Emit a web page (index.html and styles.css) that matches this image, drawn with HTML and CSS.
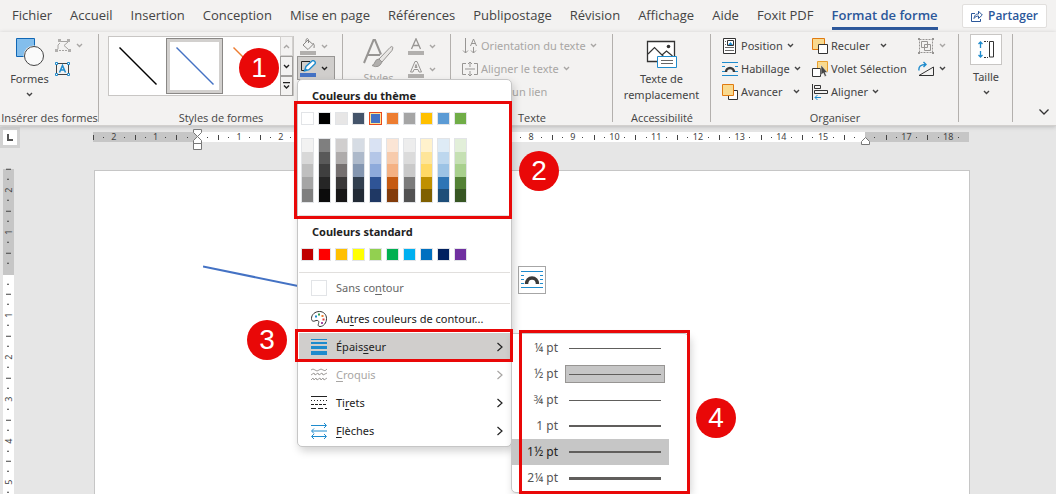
FILE: index.html
```html
<!DOCTYPE html>
<html lang="fr">
<head>
<meta charset="utf-8">
<title>Format de forme</title>
<link rel="stylesheet" href="styles.css">
</head>
<body>
<svg class="defs" aria-hidden="true">
  <symbol id="chev" viewBox="0 0 7 5"><path d="M1 1l2.500 2.500L6 1" fill="none" stroke="currentColor" stroke-width="1.400"/></symbol>
  <symbol id="arrow" viewBox="0 0 8 10"><path d="M1.500 1L6 5L1.500 9" fill="none" stroke="currentColor" stroke-width="1.200"/></symbol>
  <symbol id="wrap" viewBox="0 0 16 14"><path d="M0 .5h16M0 13.500h16M0 4.500h3M0 9.500h3M13 4.500h3M13 9.500h3" stroke="#1e8bcd"/><path d="M4 10a4 4 0 0 1 8 0" fill="none" stroke="#3b3a39" stroke-width="2.400"/></symbol>
</svg>
<div class="app">
  <nav class="tabs">
    <a href="#">Fichier</a><a href="#">Accueil</a><a href="#">Insertion</a><a href="#">Conception</a><a href="#">Mise en page</a><a href="#">Références</a><a href="#">Publipostage</a><a href="#">Révision</a><a href="#">Affichage</a><a href="#">Aide</a><a href="#">Foxit PDF</a><a href="#" class="active">Format de forme</a>
    <button class="share"><svg width="12" height="12" viewBox="0 0 12 12" fill="none" stroke="#2b579a"><path d="M4 3.500H.5v8h9V9"/><path d="M3 8.500C3.500 5 5 4 7.500 4V1.200L11.300 5 7.500 8.500V6C5.500 6 4 6.800 3 8.500z"/></svg>Partager</button>
  </nav>

  <div class="ribbon">
    <section class="group g-insert">
      <div class="body">
        <button class="big"><svg width="30" height="30" viewBox="0 0 30 30"><path d="M1.500 1.500h18v18h-18z" fill="#83beec" stroke="#1067b5"/><circle cx="19" cy="19" r="10.500" fill="#f3f2f1"/><circle cx="19" cy="19" r="9.500" fill="#fafafa" stroke="#444"/></svg><span>Formes</span><svg class="chev"><use href="#chev"/></svg></button>
        <div class="stack">
          <button class="tool dim" aria-label="Modifier la forme"><svg width="16" height="14" viewBox="0 0 16 14"><path d="M5 2.500h8M3 10Q2 5 5 4M13 3L9 6.500l4 3.500" fill="none" stroke="#a6a4a2"/><path d="M3 0h3v3H3zM12 0h3v3h-3zM0 10h3v3H0zM13 10h3v3h-3z" fill="#b1afad"/><path d="M4 11.500h8" stroke="#a6a4a2" stroke-dasharray="2 1"/></svg><svg class="chev"><use href="#chev"/></svg></button>
          <button class="tool" aria-label="Zone de texte"><svg width="16" height="14" viewBox="0 0 16 14"><path d="M1.500 1.500h12v11h-12z" fill="none" stroke="#444"/><path d="M4.500 10.500L7.500 3.500l3 7M5.500 8h4" fill="none" stroke="#1e8bcd" stroke-width="1.500"/><path d="M.5.5h2v2h-2zM12.500.5h2v2h-2zM.5 11.500h2v2h-2zM12.500 11.500h2v2h-2z" fill="#fff" stroke="#1e8bcd"/></svg></button>
        </div>
      </div>
      <h2>Insérer des formes</h2>
    </section>

    <section class="group g-styles">
      <div class="body">
        <div class="gallery">
          <button class="thumb" aria-label="Trait noir"><svg width="40" height="40"><path d="M1.500 1.500l37 37" stroke="#000" stroke-width="1.400"/></svg></button>
          <button class="thumb selected" aria-label="Trait bleu"><svg width="40" height="40"><path d="M1.500 1.500l37 37" stroke="#4472c4" stroke-width="1.400"/></svg></button>
          <button class="thumb" aria-label="Trait orange"><svg width="40" height="40"><path d="M1.500 1.500l37 37" stroke="#ed7d31" stroke-width="1.400"/></svg></button>
          <div class="scroller">
            <button class="dim" aria-label="Haut"><svg class="chev flip"><use href="#chev"/></svg></button>
            <button aria-label="Bas"><svg class="chev"><use href="#chev"/></svg></button>
            <button aria-label="Autres"><svg width="7" height="8" viewBox="0 0 7 8"><path d="M0 .5h7M1 3.500l2.500 2.500L6 3.500" fill="none" stroke="#222" stroke-width="1.400"/></svg></button>
          </div>
        </div>
        <div class="paint">
          <button class="tool dim" aria-label="Remplissage"><svg width="16" height="17" viewBox="0 0 16 17"><path d="M3 7L8 2l5 4.500-5 5zM6 4V1.500Q7.500-.5 8.500 1.500V5M13 5q2 2 1 5" fill="none" stroke="#8a8886"/><path d="M0 13h16v4H0z" fill="#b1afad"/></svg><svg class="chev"><use href="#chev"/></svg></button>
          <div class="dropdown">
            <button class="tool pressed" aria-label="Contour"><svg width="16" height="17" viewBox="0 0 16 17"><path d="M10 1.500H1.500v9H5" fill="none" stroke="#222"/><path d="M4.500 11l1.500-4.500L12 1q1-1 2.500.300T14.800 4L9 9.700z" fill="#fff" stroke="#1e8bcd" stroke-width="1.400"/><path d="M4.500 11l1-3 2 2z" fill="#1e8bcd"/><path d="M0 13h16v4H0z" fill="#4472c4"/></svg><svg class="chev"><use href="#chev"/></svg></button>

            <div class="menu" role="menu">
              <h3>Couleurs du thème</h3>
              <div class="swatches">
                <button class="c-fff" aria-label="Blanc"></button><button class="c-000" aria-label="Noir"></button><button class="c-gray" aria-label="Gris clair"></button><button class="c-slate" aria-label="Bleu-gris"></button><button class="c-blue chosen" aria-label="Bleu"></button><button class="c-orange" aria-label="Orange"></button><button class="c-mid" aria-label="Gris"></button><button class="c-gold" aria-label="Or"></button><button class="c-sky" aria-label="Bleu ciel"></button><button class="c-green" aria-label="Vert"></button>
              </div>
              <div class="swatches tints">
                <button class="t1" aria-label="Nuances de blanc"></button><button class="t2" aria-label="Nuances de noir"></button><button class="t3" aria-label="Nuances de gris clair"></button><button class="t4" aria-label="Nuances de bleu-gris"></button><button class="t5" aria-label="Nuances de bleu"></button><button class="t6" aria-label="Nuances d'orange"></button><button class="t7" aria-label="Nuances de gris"></button><button class="t8" aria-label="Nuances d'or"></button><button class="t9" aria-label="Nuances de bleu ciel"></button><button class="t10" aria-label="Nuances de vert"></button>
              </div>
              <hr>
              <h3>Couleurs standard</h3>
              <div class="swatches standard">
                <button class="s1" aria-label="Rouge foncé"></button><button class="s2" aria-label="Rouge"></button><button class="s3" aria-label="Orange standard"></button><button class="s4" aria-label="Jaune"></button><button class="s5" aria-label="Vert clair"></button><button class="s6" aria-label="Vert standard"></button><button class="s7" aria-label="Bleu clair"></button><button class="s8" aria-label="Bleu standard"></button><button class="s9" aria-label="Bleu foncé"></button><button class="s10" aria-label="Violet"></button>
              </div>
              <hr>
              <button class="item none"><span class="empty"></span><span>Sans co<u>n</u>tour</span></button>
              <hr>
              <div class="items">
                <button class="item"><svg width="16" height="16" viewBox="0 0 16 16"><path d="M5 9.500C2 11 .5 10 .5 7.500.5 3.500 4 .5 8.500.5c4 0 7 3 7 7 0 4.500-3 8-6.500 8-2 0-2-1.500-1.500-3S8 9 5 9.500z" fill="#fff" stroke="#333"/><path d="M4 4.500h2v2H4z" fill="#1e8bcd"/><path d="M7 2.500h2v2H7z" fill="#2e9e4f"/><path d="M10.500 4h2v2h-2z" fill="#ed7d31"/><path d="M11.500 7.500h2v2h-2z" fill="#e03b3b"/><path d="M10 11h2v2h-2z" fill="#a349a4"/></svg><span>Au<u>t</u>res couleurs de contour...</span></button>
                <div class="sub">
                  <button class="item open"><svg width="16" height="16"><path d="M0 .5h16" stroke="#1e8bcd"/><path d="M0 3h16v2H0zM0 7h16v3H0zM0 12h16v4H0z" fill="#1e8bcd"/></svg><span>Épais<u>s</u>eur</span><svg class="arrow"><use href="#arrow"/></svg></button>
                  <div class="weights" role="menu">
                    <button><span>¼ pt</span><i class="w1"></i></button>
                    <button><span>½ pt</span><i class="w1 current"></i></button>
                    <button><span>¾ pt</span><i class="w1"></i></button>
                    <button><span>1 pt</span><i class="w2"></i></button>
                    <button class="hover"><span>1½ pt</span><i class="w2"></i></button>
                    <button><span>2¼ pt</span><i class="w3"></i></button>
                  </div>
                </div>
                <button class="item off" disabled><svg width="16" height="14" viewBox="0 0 16 14" fill="none" stroke="#a19f9d"><path d="M0 2q2-2 4 0t4 0 4 0 4-1M0 7l3-2 1 2 3-2 1 2 3-2 1 2 4-2M0 12l2-2 1 2 2-2 1 2 3-2 1 2 2-2 1 2 3-2"/></svg><span><u>C</u>roquis</span><svg class="arrow"><use href="#arrow"/></svg></button>
                <button class="item"><svg width="16" height="14" stroke="#222"><path d="M0 .5h16"/><path d="M0 4.500h16" stroke-dasharray="1 2"/><path d="M0 8.500h16" stroke-dasharray="3 1"/><path d="M0 12.500h16" stroke-dasharray="5 2"/></svg><span>Ti<u>r</u>ets</span><svg class="arrow"><use href="#arrow"/></svg></button>
                <button class="item"><svg width="16" height="16" fill="none" stroke="#1e8bcd"><path d="M0 2.500h15M13 0l2.500 2.500L13 5M1 8h15M3 5.500L.5 8 3 10.500M1 13.500h14M3 11L.5 13.500 3 16M13 11l2.500 2.500L13 16"/></svg><span><u>F</u>lèches</span><svg class="arrow"><use href="#arrow"/></svg></button>
              </div>
            </div>
          </div>
        </div>
      </div>
      <h2>Styles de formes</h2>
    </section>

    <section class="group g-art">
      <div class="body">
        <button class="big dim"><svg width="31" height="29" viewBox="0 0 31 29"><path d="M1 24L10.500 1h1.500L18 15.500M5 16h12" fill="none" stroke="#979593" stroke-width="2"/><path d="M30 8.500q-1-2-3 0L16 20l3 3L29 11.500z" fill="#e8e6e4" stroke="#979593"/><path d="M16 20q-3 0-4 3t-3 3.500q7 3.500 10-3.500z" fill="#b1afad" stroke="#979593"/></svg><span>Styles</span></button>
        <div class="stack">
          <button class="tool dim" aria-label="Remplissage du texte"><svg width="16" height="17" viewBox="0 0 16 17"><path d="M3.500 11L8 .8 12.500 11M5 7.500h6" fill="none" stroke="#979593" stroke-width="1.300"/><path d="M0 13h16v4H0z" fill="#b1afad"/></svg><svg class="chev"><use href="#chev"/></svg></button>
          <button class="tool dim" aria-label="Contour du texte"><svg width="16" height="17" viewBox="0 0 16 17"><path d="M2.500 11L7 .5h2L13.500 11H11l-1-2.500H6L5 11zM7 6.500h2L8 3.500z" fill="#f3f2f1" stroke="#979593"/><path d="M0 13h16v4H0z" fill="#b1afad"/></svg><svg class="chev"><use href="#chev"/></svg></button>
        </div>
      </div>
    </section>

    <section class="group g-text">
      <div class="body col">
        <button class="tool dim"><svg width="16" height="16" viewBox="0 0 16 16" fill="none" stroke="#979593"><path d="M3.500 0v15M1 12.500L3.500 15 6 12.500M11.500 9v6M9 12.500l2.500 2.500 2.500-2.500M8.500 8l3-7 3 7M9.500 5.500h4"/></svg><span>Orientation du texte</span><svg class="chev"><use href="#chev"/></svg></button>
        <button class="tool dim"><svg width="16" height="16" viewBox="0 0 16 16" fill="none" stroke="#979593"><path d="M4 2.500H.5v11H4M12 2.500h3.500v11H12M3 8h10M8 1v5M8 10v5M6 3l2-2 2 2M6 13l2 2 2-2"/></svg><span>Aligner le texte</span><svg class="chev"><use href="#chev"/></svg></button>
        <button class="tool dim"><svg width="16" height="16" viewBox="0 0 16 16" fill="none" stroke="#979593"><path d="M7 5H4a3 3 0 0 0 0 6h3M9 5h3a3 3 0 0 1 0 6H9M5 8h6"/></svg><span>Créer un lien</span></button>
      </div>
      <h2>Texte</h2>
    </section>

    <section class="group g-alt">
      <div class="body">
        <button class="big"><svg width="31" height="28" viewBox="0 0 31 28"><path d="M1.500 1.500h27v20h-27z" fill="#fff" stroke="#333" stroke-width="1.300"/><path d="M2 14L8.500 7.500l10 10M16 15l4.500-4 6 5" fill="none" stroke="#333" stroke-width="1.200"/><circle cx="22.500" cy="6.500" r="1.800" fill="#333"/><path d="M11.500 16.500h19v11h-19z" fill="#fff" stroke="#1e8bcd"/><path d="M15 20.500h12M15 23.500h12" stroke="#666"/></svg><span>Texte de<br>remplacement</span></button>
      </div>
      <h2>Accessibilité</h2>
    </section>

    <section class="group g-arrange">
      <div class="body">
        <div class="col first">
          <button class="tool"><svg width="16" height="16" viewBox="0 0 16 16"><path d="M1.500.500h12v15h-12z" fill="#fff" stroke="#333"/><path d="M5.500 2.500h6v5h-6z" fill="#fff" stroke="#333"/><path d="M6 7l2.500-3L11 7z" fill="#1e8bcd"/><path d="M3 3.500h1M3 6.500h1M3 9.500h9M3 12.500h9" stroke="#666"/></svg><span>Position</span><svg class="chev"><use href="#chev"/></svg></button>
          <button class="tool"><svg width="16" height="14"><use href="#wrap"/></svg><span>Habillage</span><svg class="chev"><use href="#chev"/></svg></button>
          <button class="tool wide"><svg width="16" height="16" viewBox="0 0 16 16"><path d="M10 6.500h5.500v9h-9V12" fill="#fff" stroke="#333"/><path d="M.5.500h11v11H.5z" fill="#f9da8f" stroke="#e07a10"/></svg><span>Avancer</span><svg class="chev"><use href="#chev"/></svg></button>
        </div>
        <div class="col second">
          <button class="tool wide"><svg width="16" height="16" viewBox="0 0 16 16"><path d="M.5.500h12v11H.5z" fill="#f9da8f" stroke="#e07a10"/><path d="M6.500 6.500h9v9h-9z" fill="#fff" stroke="#333"/></svg><span>Reculer</span><svg class="chev"><use href="#chev"/></svg></button>
          <button class="tool"><svg width="16" height="16" viewBox="0 0 16 16"><path d="M5.500.500h10v10h-10z" fill="#f9da8f" stroke="#e8a030"/><path d="M.5 7.500h8v8h-8z" fill="#fff" stroke="#333"/><path d="M9 4v10l2.300-2 1.500 3.500 1.700-.800-1.500-3.200h2.500z" fill="#444" stroke="#f3f2f1" stroke-width=".5"/></svg><span>Volet Sélection</span></button>
          <button class="tool"><svg width="16" height="16" viewBox="0 0 16 16" fill="none" stroke="#333"><path d="M.5 0v16M2.500 1.500h6v3h-6zM2.500 6.500h13v3h-13z"/><path d="M9 13.500H3M5.500 11L3 13.500 5.500 16" stroke="#1e8bcd"/></svg><span>Aligner</span><svg class="chev"><use href="#chev"/></svg></button>
        </div>
        <div class="col stack">
          <button class="tool dim" aria-label="Grouper"><svg width="16" height="16" viewBox="0 0 16 16" fill="none" stroke="#979593"><path d="M1.500 1.500h13v13h-13z" stroke-dasharray="2 1"/><path d="M3.500 3.500h6v6h-6zM6.500 6.500h6v6h-6z"/><path d="M0 0h2v2H0zM14 0h2v2h-2zM0 14h2v2H0zM14 14h2v2h-2z" fill="#979593" stroke="none"/></svg><svg class="chev"><use href="#chev"/></svg></button>
          <button class="tool" aria-label="Rotation"><svg width="16" height="16" viewBox="0 0 16 16" fill="none" stroke="#333"><path d="M1 14.500L15.500 6v8.500z"/><path d="M1 9.500Q0 3.500 8 3.500M5.500 1L8 3.500 5.500 6" stroke="#1e8bcd" stroke-width="1.400"/></svg><svg class="chev"><use href="#chev"/></svg></button>
        </div>
      </div>
      <h2>Organiser</h2>
    </section>

    <section class="group g-size">
      <div class="body">
        <button class="big"><span class="tile"><svg width="17" height="17" viewBox="0 0 17 17" fill="none"><path d="M2.500 1v6M.5 3l2-2 2 2M2.500 10v6M.5 14l2 2 2-2" stroke="#1e8bcd" stroke-width="1.300"/><path d="M6 .500h4M6 16.500h4" stroke="#333" stroke-dasharray="2 1"/><path d="M11.500.500h4v15.500h-4z" stroke="#333"/></svg></span><span>Taille</span><svg class="chev"><use href="#chev"/></svg></button>
      </div>
    </section>
    <div class="collapse"><button aria-label="Réduire le ruban"><svg width="10" height="6" viewBox="0 0 10 6"><path d="M.5.500L5 5 9.500.500" fill="none" stroke="#333" stroke-width="1.300"/></svg></button></div>
  </div>

  <main class="workspace">
    <div class="side">
      <button class="tabstop" aria-label="Tabulation"><svg width="6" height="7"><path d="M1 0v6h5" fill="none" stroke="#555" stroke-width="2"/></svg></button>
      <div class="vruler"><span>2</span><span>1</span><span></span><span>1</span><span>2</span><span>3</span><span>4</span><span>5</span></div>
    </div>
    <div class="canvas">
      <div class="ruler">
        <span>2</span><span>1</span><span></span><span>1</span><span>2</span><span>3</span><span>4</span><span>5</span><span>6</span><span>7</span><span>8</span><span>9</span><span>10</span><span>11</span><span>12</span><span>13</span><span>14</span><span>15</span><span></span><span>17</span><span>18</span>
        <svg class="indent left" width="9" height="22" viewBox="0 0 9 22"><path d="M.5.500h8v3l-4 4-4-4zM4.500 7.500l4 4v3h-8v-3zM.5 14.500h8v6h-8z" fill="#fff" stroke="#777"/></svg>
        <svg class="indent right" width="9" height="8" viewBox="0 0 9 8"><path d="M4.500.500l4 4v3h-8v-3z" fill="#fff" stroke="#777"/></svg>
      </div>
      <div class="page">
        <svg class="stroke" width="100" height="24"><path d="M0 1.500L100 22" stroke="#4472c4" stroke-width="2"/></svg>
        <button class="layout" aria-label="Options de disposition"><svg width="22" height="18" viewBox="0 0 22 18"><path d="M0 .5h22M0 16.500h22M0 4.500h3M0 8.500h3M0 12.500h3M19 4.500h3M19 8.500h3M19 12.500h3" stroke="#1e8bcd"/><path d="M5.500 13a5.500 6 0 0 1 11 0" fill="none" stroke="#3b3a39" stroke-width="3.500"/></svg></button>
      </div>
    </div>
  </main>

  <div class="frame f2"></div><div class="frame f3"></div><div class="frame f4"></div>
  <div class="badge b1">1</div><div class="badge b2">2</div><div class="badge b3">3</div><div class="badge b4">4</div>
</div>
</body>
</html>
```
FILE: styles.css
```css
* { box-sizing: border-box; }
body { margin: 0; font: 11px/16px "Noto Sans", "Open Sans", sans-serif; color: #444; }
button { font: inherit; color: inherit; background: none; border: 0; padding: 0; margin: 0; white-space: nowrap; }
svg { display: block; flex: none; }
.defs { position: absolute; width: 0; height: 0; }
h2, h3 { margin: 0; }
.app { position: relative; height: 100vh; overflow: hidden; display: flex; flex-direction: column; background: #e6e6e6; }

.tabs { display: flex; align-items: center; height: 32px; padding: 0 9px 0 12px; gap: 18px; background: #f3f2f1; flex: none; font-family: "Open Sans", "Noto Sans", sans-serif; font-size: 13px; }
.tabs a { color: #444; text-decoration: none; padding: 5px 0 4px; border-bottom: 3px solid transparent; white-space: nowrap; }
.tabs a.active { color: #2b579a; font-weight: 600; border-color: #2b579a; }
.share { display: flex; align-items: center; gap: 5px; height: 24px; margin-left: auto; padding: 0 8px; background: #fff; border: 1px solid #e1dfdd; border-radius: 2px; color: #2b579a; font-size: 12px; font-weight: 600; }

.ribbon { display: flex; height: 94px; padding-top: 2px; background: #f3f2f1; border-bottom: 1px solid #d2d0ce; box-shadow: 0 1px 4px #bbb; flex: none; position: relative; z-index: 2; }
.group { display: flex; flex-direction: column; flex: none; background: linear-gradient(#b3b0ad, #b3b0ad) 100% 0 / 1px 88px no-repeat; }
.group h2 { margin-top: auto; padding-bottom: 1px; line-height: 12px; font-family: "Open Sans", "Noto Sans", sans-serif; font-size: 11px; font-weight: 400; text-align: center; white-space: nowrap; }
.body { display: flex; }
.col { display: flex; flex-direction: column; }
.g-insert { width: 99px; }
.g-styles { width: 244px; }
.g-art { width: 108px; }
.g-text { width: 162px; }
.g-alt { width: 98px; }
.g-arrange { width: 248px; }
.g-size { width: 54px; }
.tool { display: flex; align-items: center; height: 23px; gap: 3px; }
.dim { color: #a8a6a4; }
.chev { width: 7px; height: 5px; margin-left: 1px; }
.stack .chev, .paint .chev { margin-left: 2px; }
.flip { transform: scaleY(-1); }
.big { display: flex; flex-direction: column; align-items: center; }
.big .chev { margin: 5px 0 0; }

.g-insert .body { padding-left: 10px; gap: 6px; }
.g-insert .big { padding-top: 3px; width: 39px; }
.g-insert .big span { margin-top: 4px; }
.g-styles .body { padding: 2px 0 0 9px; gap: 3px; }
.gallery { display: flex; align-items: center; width: 186px; height: 60px; background: #fff; border: 1px solid #c8c6c4; }
.thumb { width: 57px; height: 56px; display: grid; place-items: center; flex: none; overflow: hidden; }
.thumb.selected { border: 1px solid #8a8886; box-shadow: inset 0 0 0 3px #d2d0ce; }
.scroller { width: 15px; height: 60px; margin-left: auto; display: flex; flex-direction: column; position: relative; background: #f3f2f1; color: #222; }
.scroller button { flex: 1; display: grid; place-items: center; border: 1px solid #a19f9d; }
.scroller .dim { border-color: #d2d0ce; }
.scroller .chev { margin: 0; }
.paint .tool { width: 38px; padding-left: 3px; height: 20px; }
.paint .tool.pressed { height: 24px; padding-left: 2px; background: #d0cecc; border: 1px solid #979593; color: #222; }
.dropdown { position: relative; }
.g-art .body { padding: 2px 0 0 20px; gap: 14px; }
.g-art .big { padding-top: 3px; width: 31px; }
.g-art .big span { margin-top: 2px; }
.g-art .tool { height: 20px; margin-bottom: 3px; }
.g-text .body { padding-left: 11px; }
.g-alt .big { width: 97px; padding-top: 6px; }
.g-alt .big span { margin-top: 3px; text-align: center; }
.g-arrange .body { padding-left: 11px; }
.first { width: 90px; }
.second { width: 106px; }
.wide .chev { margin-left: 7px; }
.g-size .big { width: 54px; }
.tile { display: grid; place-items: center; width: 32px; height: 31px; margin-bottom: 4px; background: #fff; border: 1px solid #c8c6c4; }
.collapse { flex: 1; display: flex; justify-content: flex-end; align-items: flex-end; padding: 0 7px 10px 0; }

.menu { position: absolute; left: 0; top: 23px; width: 215px; padding: 0 1px 1px; background: #fff; border: 1px solid #c6c6c6; border-radius: 5px; box-shadow: 2px 4px 8px rgba(0,0,0,.18); color: #222; }
.menu h3 { padding-left: 13px; font-size: 11px; line-height: 32px; font-weight: 700; }
.menu hr { margin: 0; border: 0; height: 1px; background: #e1dfdd; }
.swatches { display: flex; gap: 4px; padding-left: 2px; margin-bottom: 13px; }
.swatches button { width: 13px; height: 13px; border: 1px solid #e2e4e7; }
.swatches.tints { margin-bottom: 12px; }
.swatches.standard { margin-bottom: 11px; }
.tints button { height: 65px; background: linear-gradient(var(--a) 20%, var(--b) 20% 40%, var(--c) 40% 60%, var(--d) 60% 80%, var(--e) 80%); }
.c-fff { background: #fff; } .c-000 { background: #000; } .c-gray { background: #e7e6e6; } .c-slate { background: #44546a; } .c-blue { background: #4472c4; }
.c-orange { background: #ed7d31; } .c-mid { background: #a5a5a5; } .c-gold { background: #ffc000; } .c-sky { background: #5b9bd5; } .c-green { background: #70ad47; }
.swatches .chosen { border-color: #e8491d; box-shadow: inset 0 0 0 1px #ffe294; }
.t1 { --a: #f2f2f2; --b: #d8d8d8; --c: #bfbfbf; --d: #a5a5a5; --e: #7f7f7f; }
.t2 { --a: #7f7f7f; --b: #595959; --c: #3f3f3f; --d: #262626; --e: #0c0c0c; }
.t3 { --a: #d0cece; --b: #aeabab; --c: #757070; --d: #3a3838; --e: #171616; }
.t4 { --a: #d6dce4; --b: #adb9ca; --c: #8496b0; --d: #323f4f; --e: #222a35; }
.t5 { --a: #d9e2f3; --b: #b4c6e7; --c: #8eaadb; --d: #2f5496; --e: #1f3864; }
.t6 { --a: #fbe5d5; --b: #f7cbac; --c: #f4b183; --d: #c55a11; --e: #833c0b; }
.t7 { --a: #ededed; --b: #dbdbdb; --c: #c9c9c9; --d: #7b7b7b; --e: #525252; }
.t8 { --a: #fff2cc; --b: #fee599; --c: #ffd965; --d: #bf9000; --e: #7f6000; }
.t9 { --a: #deebf6; --b: #bdd7ee; --c: #9cc3e5; --d: #2e75b5; --e: #1e4e79; }
.t10 { --a: #e2efd9; --b: #c5e0b3; --c: #a8d08d; --d: #538135; --e: #375623; }
.s1 { background: #c00000; } .s2 { background: #f00; } .s3 { background: #ffc000; } .s4 { background: #ff0; } .s5 { background: #92d050; }
.s6 { background: #00b050; } .s7 { background: #00b0f0; } .s8 { background: #0070c0; } .s9 { background: #002060; } .s10 { background: #7030a0; }
.item { display: flex; align-items: center; gap: 9px; width: 100%; height: 28px; padding: 0 6px 0 12px; }
.item u { text-underline-offset: 2px; }
.none { height: 30px; color: #666; }
.empty { width: 16px; height: 16px; border: 1px solid #e2e4e7; }
.items { padding-top: 1px; }
.open { background: #d0cecc; }
.off { color: #a8a6a4; }
.arrow { width: 8px; height: 10px; margin-left: auto; }
.sub { position: relative; }
.weights { position: absolute; left: 212px; top: 0; width: 178px; padding: 1px 0; background: #fff; border: 1px solid #c6c6c6; border-radius: 0 5px 5px 5px; box-shadow: 2px 4px 8px rgba(0,0,0,.18); color: #555; font-size: 12px; }
.weights button { display: flex; align-items: center; width: 157px; height: 26px; }
.weights span { width: 46px; text-align: right; margin-right: 7px; }
.weights i { width: 100px; height: 18px; border: 1px solid transparent; background: linear-gradient(#605e5c, #605e5c) center / 92px var(--w) no-repeat; }
.w1 { --w: 1px; } .w2 { --w: 2px; } .w3 { --w: 3px; }
.weights .current { background-color: #c6c6c6; border-color: #979593; }
.weights .hover { background: #c6c6c6; color: #222; }

.workspace { flex: 1; display: flex; min-height: 0; }
.side { width: 93px; flex: none; }
.tabstop { display: grid; place-items: center; width: 20px; height: 21px; background: #fff; border: 3px solid #d2d2d2; margin-top: 1px; }
.vruler { display: flex; flex-direction: column; width: 11px; height: 334px; margin: 21px 0 0 3px; background: linear-gradient(#c6c6c6 106px, #fff 106px); }
.ruler span, .vruler span { display: grid; place-items: center; color: #444; font-size: 9px; line-height: 10px; }
.vruler span { flex: 1; writing-mode: vertical-rl; transform: rotate(180deg); background: linear-gradient(#444, #444) 50% 100% / 5px 1px no-repeat, linear-gradient(#444, #444) 50% 25% / 2px 1px no-repeat, linear-gradient(#444, #444) 50% 75% / 2px 1px no-repeat; }
.canvas { flex: 1; display: flex; flex-direction: column; margin-right: 86px; padding-top: 6px; }
.ruler { position: relative; display: flex; height: 10px; margin-right: 1px; flex: none; background: linear-gradient(90deg, #c6c6c6 104px, #fff 104px calc(100% - 104px), #c6c6c6 calc(100% - 104px)); }
.ruler span { flex: 1; background: linear-gradient(#444, #444) 0 50% / 1px 5px no-repeat, linear-gradient(#444, #444) 25% 50% / 1px 1px no-repeat, linear-gradient(#444, #444) 75% 50% / 1px 1px no-repeat; }
.indent { position: absolute; }
.indent.left { left: 100px; top: -3px; }
.indent.right { right: 99px; top: 5px; }
.page { flex: 1; position: relative; margin: 28px 0 0 1px; background: #fff; border: 1px solid #c6c6c6; border-bottom: 0; }
.stroke { position: absolute; left: 108px; top: 94px; }
.layout { position: absolute; left: 423px; top: 95px; width: 28px; height: 28px; display: grid; place-items: center; background: #fff; border: 1px solid #a6a6a6; }

.frame { position: absolute; z-index: 3; border: 3px solid #e90808; }
.f2 { left: 294px; top: 101px; width: 218px; height: 118px; }
.f3 { left: 295px; top: 329px; width: 218px; height: 33px; }
.f4 { left: 519px; top: 330px; width: 171px; height: 164px; }
.badge { position: absolute; z-index: 4; width: 40px; height: 40px; border-radius: 50%; background: #e90808; color: #fff; font: 28px/40px "Liberation Sans", Arial, sans-serif; text-align: center; }
.b1 { left: 239px; top: 48px; } .b2 { left: 519px; top: 151px; } .b3 { left: 247px; top: 320px; } .b4 { left: 696px; top: 398px; }
```
